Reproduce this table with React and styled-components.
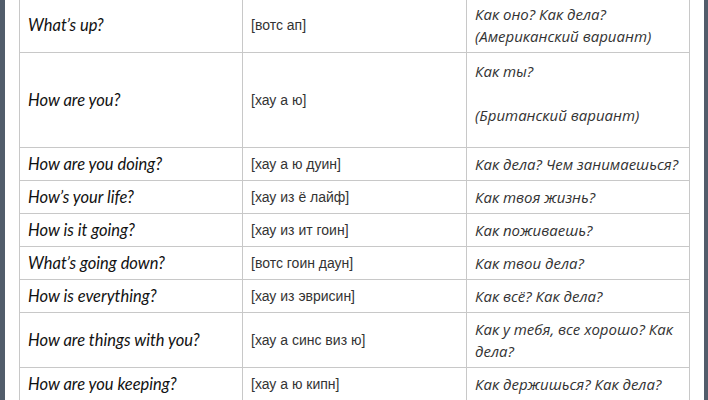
import React from "react";
import styled, { createGlobalStyle } from "styled-components";

const GlobalStyle = createGlobalStyle`
  html, body {
    margin: 0;
    padding: 0;
    background: #525d6b;
  }
`;

const Page = styled.div`
  background: #ffffff;
  margin: 0 4px 0 5px;
  height: 400px;
  overflow: hidden;
  padding-left: 14px;
`;

const Table = styled.table`
  border-collapse: collapse;
  table-layout: fixed;
  width: 670px;
  margin-top: -3px;
`;

const Row = styled.tr`
  height: ${(p) => (p.$h ? `${p.$h}px` : "auto")};
`;

const Cell = styled.td`
  border: 1px solid #c8c8c8;
  padding: ${(p) => (p.$top ? "7px 8px 5px" : "5px 8px")};
  vertical-align: ${(p) => (p.$top ? "top" : "middle")};
  line-height: 22px;
  white-space: nowrap;
  color: #2b2b2b;
`;

const Phrase = styled(Cell)`
  font-family: Lato, "Open Sans", sans-serif;
  font-style: italic;
  font-size: 16.5px;
  color: #121212;
`;

const Transcription = styled(Cell)`
  font-family: "Liberation Sans", Arial, sans-serif;
  font-size: 14px;
  color: #333333;
`;

const Translation = styled(Cell)`
  font-family: "Open Sans", "Noto Sans", sans-serif;
  font-style: italic;
  font-size: 15px;
  color: #333333;
`;

const rows = [
  { en: "What’s up?", tr: "[вотс ап]", ru: ["Как оно? Как дела?", "(Американский вариант)"] },
  { en: "How are you?", tr: "[хау а ю]", ru: ["Как ты?", "", "(Британский вариант)"], h: 95, top: true },
  { en: "How are you doing?", tr: "[хау а ю дуин]", ru: ["Как дела? Чем занимаешься?"] },
  { en: "How’s your life?", tr: "[хау из ё лайф]", ru: ["Как твоя жизнь?"] },
  { en: "How is it going?", tr: "[хау из ит гоин]", ru: ["Как поживаешь?"] },
  { en: "What’s going down?", tr: "[вотс гоин даун]", ru: ["Как твои дела?"] },
  { en: "How is everything?", tr: "[хау из  эврисин]", ru: ["Как всё? Как дела?"] },
  { en: "How are things with you?", tr: "[хау а синс виз ю]", ru: ["Как у тебя, все хорошо? Как", "дела?"] },
  { en: "How are you keeping?", tr: "[хау а ю кипн]", ru: ["Как держишься? Как дела?"] },
];

export default function App() {
  return (
    <>
      <GlobalStyle />
      <Page>
        <Table>
          <colgroup>
            <col style={{ width: 223 }} />
            <col style={{ width: 224 }} />
            <col style={{ width: 223 }} />
          </colgroup>
          <tbody>
            {rows.map((r) => (
              <Row key={r.en} $h={r.h}>
                <Phrase>{r.en}</Phrase>
                <Transcription>{r.tr}</Transcription>
                <Translation $top={r.top}>
                  {r.ru.map((line, i) => (
                    <React.Fragment key={i}>
                      {i > 0 && <br />}
                      {line}
                    </React.Fragment>
                  ))}
                </Translation>
              </Row>
            ))}
          </tbody>
        </Table>
      </Page>
    </>
  );
}
